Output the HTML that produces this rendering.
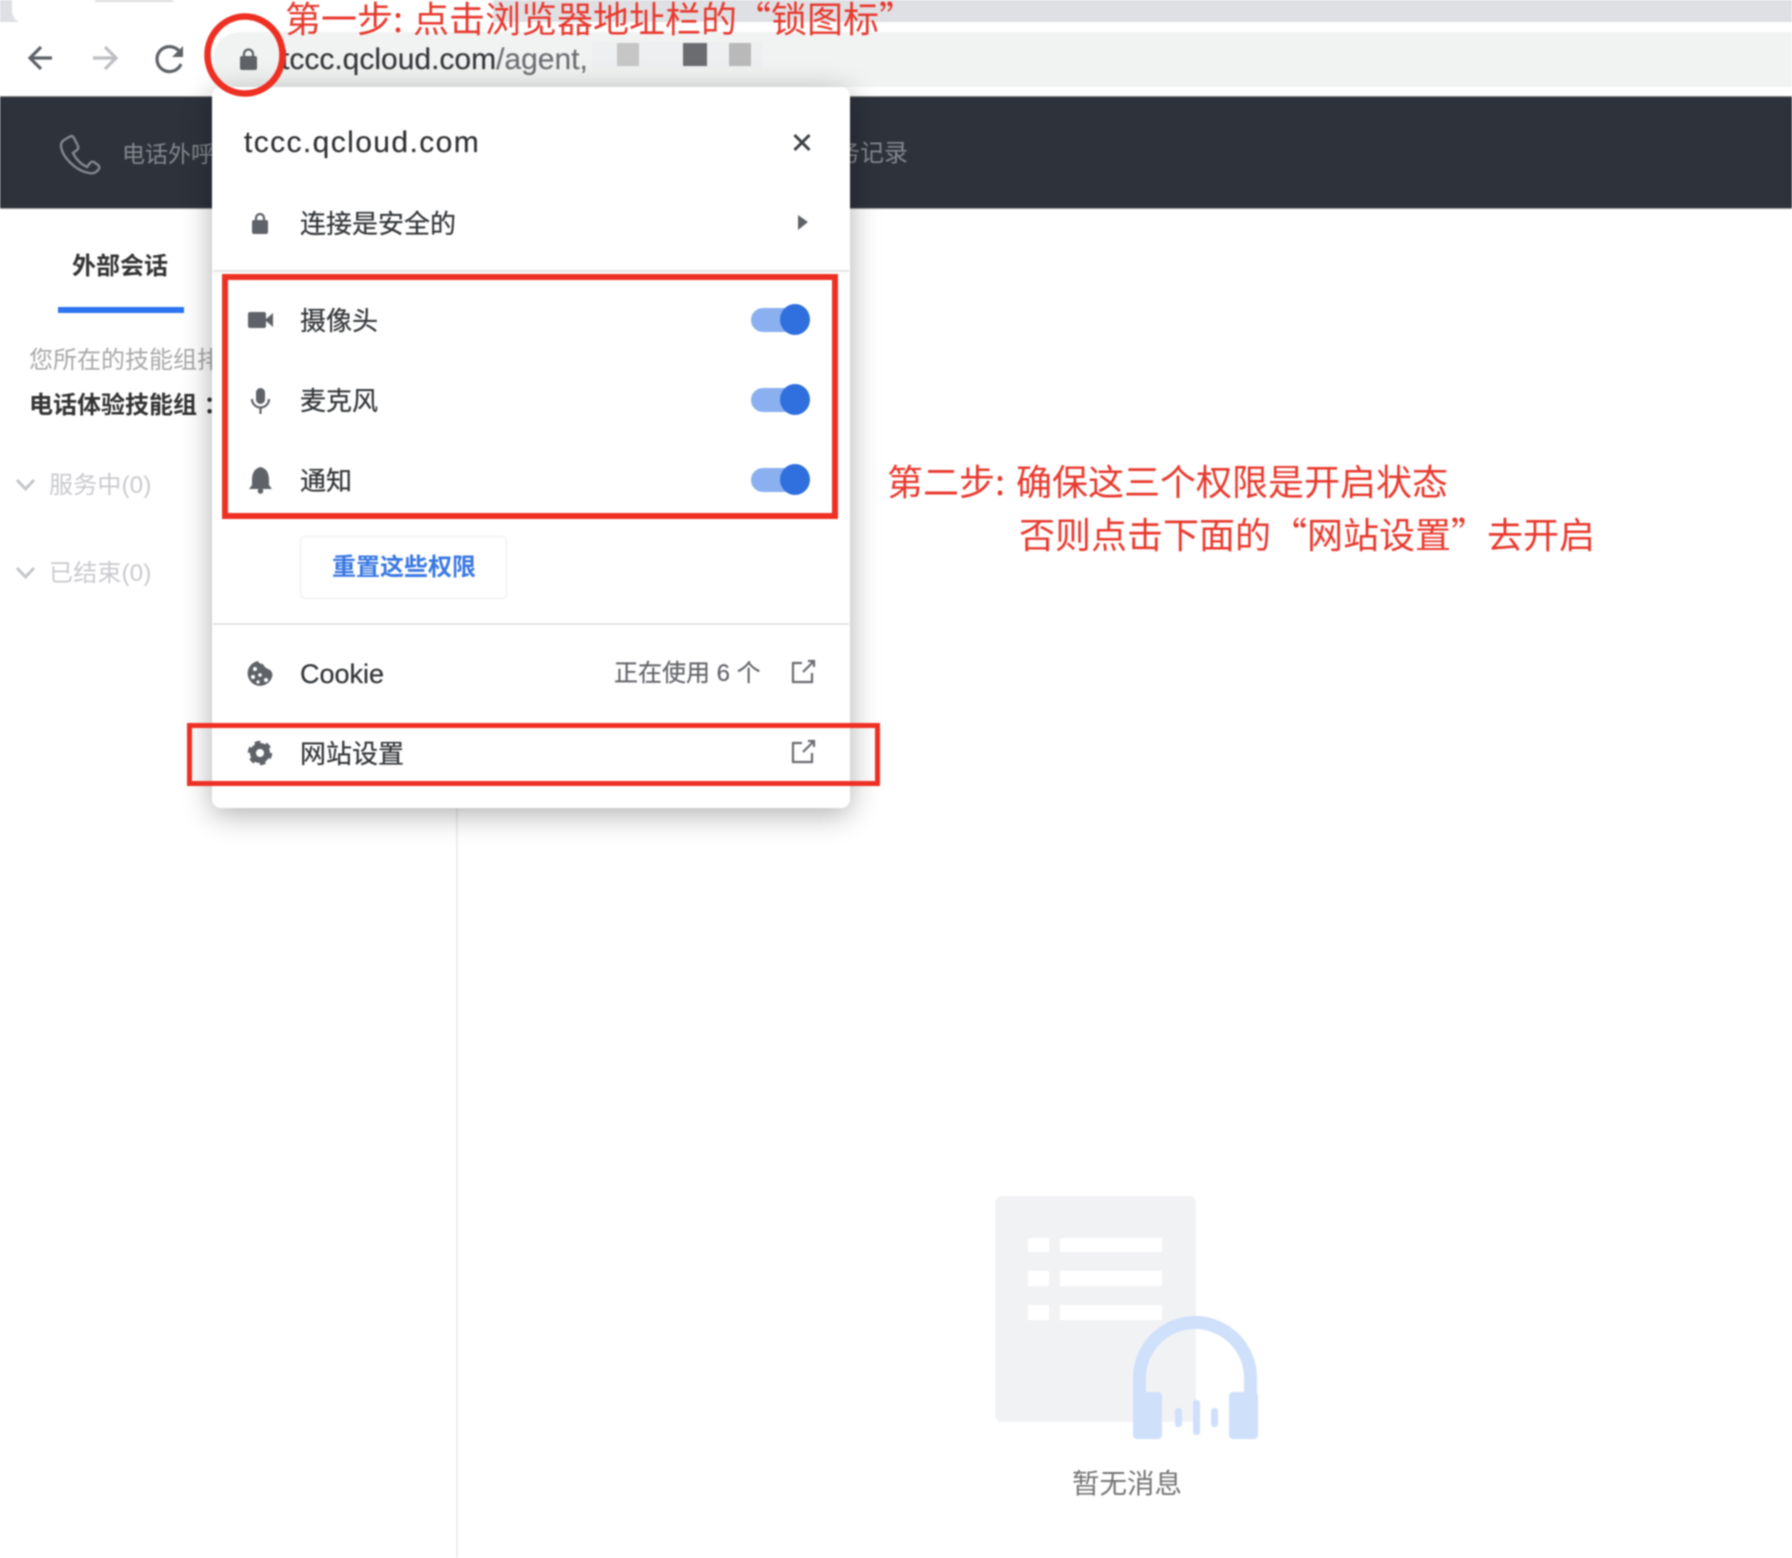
<!DOCTYPE html>
<html lang="zh">
<head>
<meta charset="utf-8">
<title>权限设置</title>
<style>
html,body{margin:0;padding:0;background:#fff}
#root{position:relative;width:1792px;height:1558px;overflow:hidden;background:#fff;font-family:"Liberation Sans","Noto Sans CJK SC",sans-serif;filter:blur(.75px)}
.a{position:absolute}
.t{position:absolute;white-space:nowrap;line-height:40px;height:40px}
.red{color:#e8392e;font-family:"Noto Sans CJK SC","Liberation Sans",sans-serif;font-size:36px;font-weight:400}
.row{color:#34373a;font-size:26px;left:300px;-webkit-text-stroke:.25px #34373a}
.track{position:absolute;left:751px;width:56px;height:24px;border-radius:12px;background:#8ab0f0}
.thumb{position:absolute;left:780px;width:30px;height:31px;border-radius:50%;background:#2f6fde}
.box{position:absolute;border:5px solid #ee3024;box-sizing:border-box}
svg{position:absolute;left:0;top:0}
</style>
</head>
<body>
<div id="root">
  <!-- tab strip -->
  <div class="a" style="left:0;top:0;width:1792px;height:22px;background:#dfe0e4"></div>
  <div class="a" style="left:12px;top:0;width:481px;height:23px;background:#fff;border-bottom-left-radius:12px"></div>
  <div class="a" style="left:95px;top:0;width:78px;height:2px;background:#ddd"></div>
  <!-- toolbar -->
  <div class="a" style="left:213px;top:32px;width:1579px;height:55px;background:#f1f3f2;border-radius:27px 0 0 27px"></div>
  <div class="t" style="left:281px;top:40px;font-size:30px;color:#36383c;-webkit-text-stroke:.2px #36383c">tccc.qcloud.com<span style="color:#6f7175;-webkit-text-stroke:.2px #6f7175">/agent,</span></div>
  <div class="a" style="left:592px;top:42px;width:170px;height:27px;background:#eeeff0"></div>
  <div class="a" style="left:617px;top:43px;width:22px;height:23px;background:#c6c6c6"></div>
  <div class="a" style="left:683px;top:43px;width:24px;height:23px;background:#6b6c70"></div>
  <div class="a" style="left:729px;top:43px;width:22px;height:23px;background:#b9b9b9"></div>

  <!-- dark nav -->
  <div class="a" style="left:0;top:96px;width:1792px;height:113px;background:#2e323b;border-top:1px solid #888;border-bottom:1px solid #999;box-sizing:border-box"></div>
  <div class="t" style="left:122px;top:134px;font-size:23px;color:#84878e">电话外呼</div>
  <div class="t" style="left:812px;top:134px;font-size:24px;color:#84878e">服务记录</div>

  <!-- sidebar -->
  <div class="a" style="left:456px;top:209px;width:2px;height:1349px;background:#eeeeee"></div>
  <div class="t" style="left:72px;top:247px;font-size:24px;font-weight:700;color:#333">外部会话</div>
  <div class="a" style="left:58px;top:307px;width:126px;height:6px;background:#2a74f0"></div>
  <div class="t" style="left:29px;top:341px;font-size:24px;color:#a8a8a8">您所在的技能组排</div>
  <div class="t" style="left:29px;top:385.500px;font-size:24px;font-weight:700;color:#333">电话体验技能组 ：</div>
  <div class="t" style="left:49px;top:466px;font-size:24px;letter-spacing:.2px;color:#c9cace">服务中(0)</div>
  <div class="t" style="left:49px;top:554px;font-size:24px;letter-spacing:.2px;color:#c9cace">已结束(0)</div>

  <!-- empty state -->
  <div class="a" style="left:995px;top:1196px;width:201px;height:226px;background:#f1f2f4;border-radius:7px"></div>
  <div class="a" style="left:1028px;top:1238px;width:21px;height:14px;background:#fff"></div>
  <div class="a" style="left:1060px;top:1238px;width:102px;height:14px;background:#fff"></div>
  <div class="a" style="left:1028px;top:1271px;width:21px;height:15px;background:#fff"></div>
  <div class="a" style="left:1060px;top:1271px;width:102px;height:15px;background:#fff"></div>
  <div class="a" style="left:1028px;top:1305px;width:21px;height:15px;background:#fff"></div>
  <div class="a" style="left:1060px;top:1305px;width:102px;height:15px;background:#fff"></div>
  <div class="t" style="left:1072px;top:1464px;font-size:27.500px;color:#757575">暂无消息</div>

  <svg width="1792" height="1558" viewBox="0 0 1792 1558">
    <!-- toolbar icons -->
    <path d="M52 58H31M41 47L30 58L41 69" fill="none" stroke="#5f6368" stroke-width="3.200"/>
    <path d="M93 58H116M105 47L116 58L105 69" fill="none" stroke="#bdbfc2" stroke-width="3.200"/>
    <path d="M179 51A12.500 12.500 0 1 0 181 64" fill="none" stroke="#5f6368" stroke-width="3.200"/>
    <path d="M183 46V57H172Z" fill="#5f6368"/>
    <rect x="240" y="56" width="17" height="14" rx="2" fill="#5f6368"/>
    <path d="M244 57V54A4.500 4.500 0 0 1 253 54V57" fill="none" stroke="#5f6368" stroke-width="2.200"/>
    <!-- phone -->
    <path d="M64 140L71 136Q73 136 74 138L78 146Q79 148 77 150L73 153Q78 163 87 167L90 163Q92 161 94 162L98 165Q100 167 99 169L96 172Q93 174 89 173C76 171 62 157 61 146Q61 142 64 140Z" fill="none" stroke="#84878e" stroke-width="2.400"/>
    <!-- chevrons -->
    <path d="M17 480L25.500 489L34 480" fill="none" stroke="#c4c6cb" stroke-width="3"/>
    <path d="M17 568L25.500 577L34 568" fill="none" stroke="#c4c6cb" stroke-width="3"/>
    <!-- headset -->
    <path d="M1139.500 1400V1378A55.500 55.500 0 0 1 1250.500 1378V1400" fill="none" stroke="#cfe0fb" stroke-width="13"/>
    <rect x="1133" y="1392" width="29" height="47" rx="4" fill="#cfe0fb"/>
    <rect x="1229" y="1392" width="29" height="47" rx="4" fill="#cfe0fb"/>
    <rect x="1175" y="1408" width="7" height="19" rx="3" fill="#cfe0fb"/>
    <rect x="1193" y="1400" width="7" height="35" rx="3" fill="#cfe0fb"/>
    <rect x="1211" y="1408" width="7" height="19" rx="3" fill="#cfe0fb"/>
  </svg>

  <!-- popup -->
  <div class="a" style="left:212px;top:87px;width:638px;height:721px;background:#fff;border-radius:9px;box-shadow:0 6px 30px rgba(0,0,0,.32)">
  </div>
  <div class="t" style="left:244px;top:123px;font-size:30px;letter-spacing:1.400px;color:#303134;-webkit-text-stroke:.2px #303134">tccc.qcloud.com</div>
  <div class="t row" style="top:204px">连接是安全的</div>
  <div class="a" style="left:213px;top:270px;width:636px;height:2px;background:#e4e4e4"></div>
  <div class="t row" style="top:301px">摄像头</div>
  <div class="t row" style="top:381px">麦克风</div>
  <div class="t row" style="top:461px">通知</div>
  <div class="track" style="top:308px"></div><div class="thumb" style="top:304px"></div>
  <div class="track" style="top:388px"></div><div class="thumb" style="top:384px"></div>
  <div class="track" style="top:468px"></div><div class="thumb" style="top:464px"></div>
  <div class="a" style="left:300px;top:535.500px;width:207px;height:63px;border:1px solid #ececec;border-radius:5px;box-sizing:border-box"></div>
  <div class="t" style="left:332px;top:548px;font-size:24px;font-weight:700;color:#3a78e2">重置这些权限</div>
  <div class="a" style="left:213px;top:623px;width:636px;height:2px;background:#e4e4e4"></div>
  <div class="t row" style="top:653.500px;font-size:27px">Cookie</div>
  <div class="t" style="left:614px;top:654px;font-size:24px;color:#63656a;-webkit-text-stroke:.2px #63656a">正在使用 6 个</div>
  <div class="t row" style="top:733.500px">网站设置</div>

  <svg width="1792" height="1558" viewBox="0 0 1792 1558">
    <!-- close -->
    <path d="M794.500 135L809.500 150M809.500 135L794.500 150" stroke="#3c4043" stroke-width="3" fill="none"/>
    <!-- lock -->
    <rect x="252" y="220" width="16" height="14" rx="2" fill="#5f6368"/>
    <path d="M256 221V218A4 4 0 0 1 264 218V221" fill="none" stroke="#5f6368" stroke-width="2.200"/>
    <path d="M798 215L808 222L798 230Z" fill="#5f6368"/>
    <!-- camera -->
    <rect x="248" y="312" width="18" height="16" rx="2" fill="#5f6368"/>
    <path d="M266 319L273 313V327L266 321Z" fill="#5f6368"/>
    <!-- mic -->
    <rect x="256" y="388" width="9" height="16" rx="4.500" fill="#5f6368"/>
    <path d="M252 399A8.500 8.500 0 0 0 269 399M260.500 408V414" fill="none" stroke="#5f6368" stroke-width="2.200"/>
    <!-- bell -->
    <path d="M260.500 467Q269 469 269 480V485L272 489H249L252 485V480Q252 469 260.500 467Z" fill="#5f6368"/>
    <circle cx="260.500" cy="491" r="2.800" fill="#5f6368"/>
    <!-- cookie -->
    <path d="M258 661A12.500 12.500 0 1 0 272.500 675Q272 670 268 669Q264 667 263 664Q259 664 258 661Z" fill="#5f6368"/>
    <circle cx="255" cy="669" r="2" fill="#fff"/>
    <circle cx="253" cy="677" r="2" fill="#fff"/>
    <circle cx="260" cy="675" r="1.800" fill="#fff"/>
    <circle cx="266" cy="680" r="2" fill="#fff"/>
    <circle cx="258" cy="682" r="1.600" fill="#fff"/>
    <!-- gear -->
    <circle cx="260" cy="753" r="7" fill="none" stroke="#5f6368" stroke-width="6"/>
    <circle cx="260" cy="753" r="10.500" fill="none" stroke="#5f6368" stroke-width="3.500" stroke-dasharray="5.500 5.500"/>
    <!-- external -->
    <path d="M802 663H793V682H812V673M803 672L814 661M808 661H814V667" fill="none" stroke="#6a6c70" stroke-width="2.200"/>
    <path d="M802 743H793V762H812V753M803 752L814 741M808 741H814V747" fill="none" stroke="#6a6c70" stroke-width="2.200"/>
    <!-- red circle -->
    <ellipse cx="245" cy="55" rx="37.500" ry="38.500" fill="none" stroke="#ee2f22" stroke-width="6.500"/>
  </svg>

  <!-- annotations -->
  <div class="box" style="left:222px;top:274px;width:616px;height:245px;border-width:6px"></div>
  <div class="box" style="left:186.500px;top:723px;width:693.500px;height:63px"></div>
  <div class="t red" style="left:285px;top:-3px">第一步:</div>
  <div class="t red" style="left:413px;top:-3px">点击浏览器地址栏的</div>
  <div class="t red" style="left:735px;top:-3px">“锁图标”</div>
  <div class="t red" style="left:887px;top:460px">第二步:</div>
  <div class="t red" style="left:1016px;top:460px">确保这三个权限是开启状态</div>
  <div class="t red" style="left:1019px;top:513px">否则点击下面的“网站设置”去开启</div>
</div>
</body>
</html>
